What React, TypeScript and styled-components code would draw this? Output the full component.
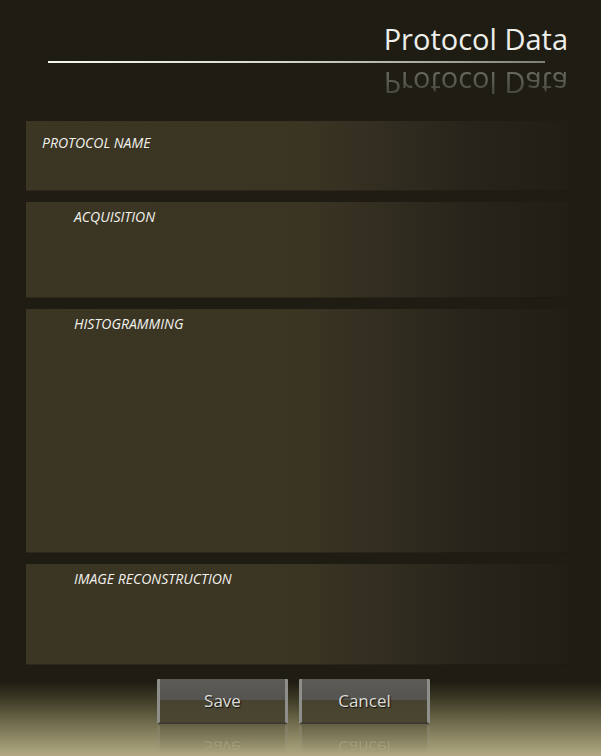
import React from "react";
import styled, { createGlobalStyle } from "styled-components";

const GlobalStyle = createGlobalStyle`
  html, body {
    margin: 0;
    padding: 0;
    background: #1f1d13;
  }
  * { box-sizing: border-box; }
`;

const Page = styled.div`
  width: 601px;
  height: 756px;
  overflow: hidden;
  font-family: "Open Sans", "Noto Sans", sans-serif;
  background: linear-gradient(
    to bottom,
    #1f1d13 0px,
    #1f1d13 682px,
    #3f3c28 700px,
    #6e6a4b 722px,
    #b2aa84 756px
  );
  display: flex;
  flex-direction: column;
`;

const Header = styled.header`
  padding-top: 18px;
  display: flex;
  flex-direction: column;
`;

const Title = styled.h1<{ $mirror?: boolean }>`
  margin: 0;
  padding-right: 33px;
  text-align: right;
  font-family: "Open Sans", "Noto Sans", sans-serif;
  font-weight: 400;
  font-size: 29px;
  line-height: 41px;
  height: 41px;
  color: ${(p) => (p.$mirror ? "#85857f" : "#eeeeea")};
  ${(p) =>
    p.$mirror &&
    `
    transform: scaleY(-1);
    -webkit-mask-image: linear-gradient(to bottom, rgba(0,0,0,0.25), rgba(0,0,0,0.85));
    mask-image: linear-gradient(to bottom, rgba(0,0,0,0.25), rgba(0,0,0,0.85));
  `}
`;

const Rule = styled.div`
  margin: 2px 0 0 48px;
  width: 497px;
  height: 2px;
  background: linear-gradient(to right, #f6f6f0 0%, #d9d9d0 45%, #a3a39c 80%, #7d7d78 100%);
`;

const Panels = styled.main`
  margin-top: 17px;
  padding-left: 26px;
  display: flex;
  flex-direction: column;
  gap: 11px;
`;

const Panel = styled.section<{ $h: number; $indent: number; $top: number }>`
  width: 542px;
  height: ${(p) => p.$h}px;
  padding: ${(p) => p.$top}px 0 0 ${(p) => p.$indent}px;
  background: linear-gradient(
    to right,
    #3b3524 0%,
    #3a3423 52%,
    #302c1f 68%,
    #25231a 84%,
    #201e15 100%
  );
  border-bottom: 1px solid rgba(20, 18, 10, 0.35);
`;

const Label = styled.div`
  font-family: "Open Sans", "Noto Sans", sans-serif;
  font-style: italic;
  font-size: 14px;
  line-height: 18px;
  color: #f2f2ec;
`;

const ButtonRow = styled.div<{ $mirror?: boolean }>`
  margin-top: ${(p) => (p.$mirror ? "0" : "14px")};
  padding-left: 157px;
  display: flex;
  gap: 11px;
  ${(p) =>
    p.$mirror &&
    `
    transform: scaleY(-1);
    opacity: 0.28;
    -webkit-mask-image: linear-gradient(to bottom, rgba(0,0,0,0) 30%, rgba(0,0,0,1));
    mask-image: linear-gradient(to bottom, rgba(0,0,0,0) 30%, rgba(0,0,0,1));
  `}
`;

const Button = styled.button`
  width: 131px;
  height: 45px;
  padding: 0;
  border: none;
  border-left: 3px solid #8e8e8a;
  border-right: 3px solid #8e8e8a;
  border-bottom: 2px solid rgba(40, 38, 28, 0.6);
  border-radius: 1px;
  background: linear-gradient(
    to bottom,
    #5c5b56 0%,
    #555450 48%,
    #47432f 50%,
    #4a4632 100%
  );
  color: #dededa;
  font-family: "Open Sans", "Noto Sans", sans-serif;
  font-size: 17px;
  line-height: 20px;
  text-shadow: 1px 1px 1px #111;
  cursor: pointer;
`;

export default function App() {
  return (
    <>
      <GlobalStyle />
      <Page>
        <Header>
          <Title>Protocol Data</Title>
          <Rule />
          <Title $mirror aria-hidden>
            Protocol Data
          </Title>
        </Header>
        <Panels>
          <Panel $h={70} $indent={16} $top={13}>
            <Label>PROTOCOL NAME</Label>
          </Panel>
          <Panel $h={96} $indent={48} $top={6}>
            <Label>ACQUISITION</Label>
          </Panel>
          <Panel $h={244} $indent={48} $top={6}>
            <Label>HISTOGRAMMING</Label>
          </Panel>
          <Panel $h={101} $indent={48} $top={6}>
            <Label>IMAGE RECONSTRUCTION</Label>
          </Panel>
        </Panels>
        <ButtonRow>
          <Button>Save</Button>
          <Button>Cancel</Button>
        </ButtonRow>
        <ButtonRow $mirror aria-hidden>
          <Button tabIndex={-1}>Save</Button>
          <Button tabIndex={-1}>Cancel</Button>
        </ButtonRow>
      </Page>
    </>
  );
}
